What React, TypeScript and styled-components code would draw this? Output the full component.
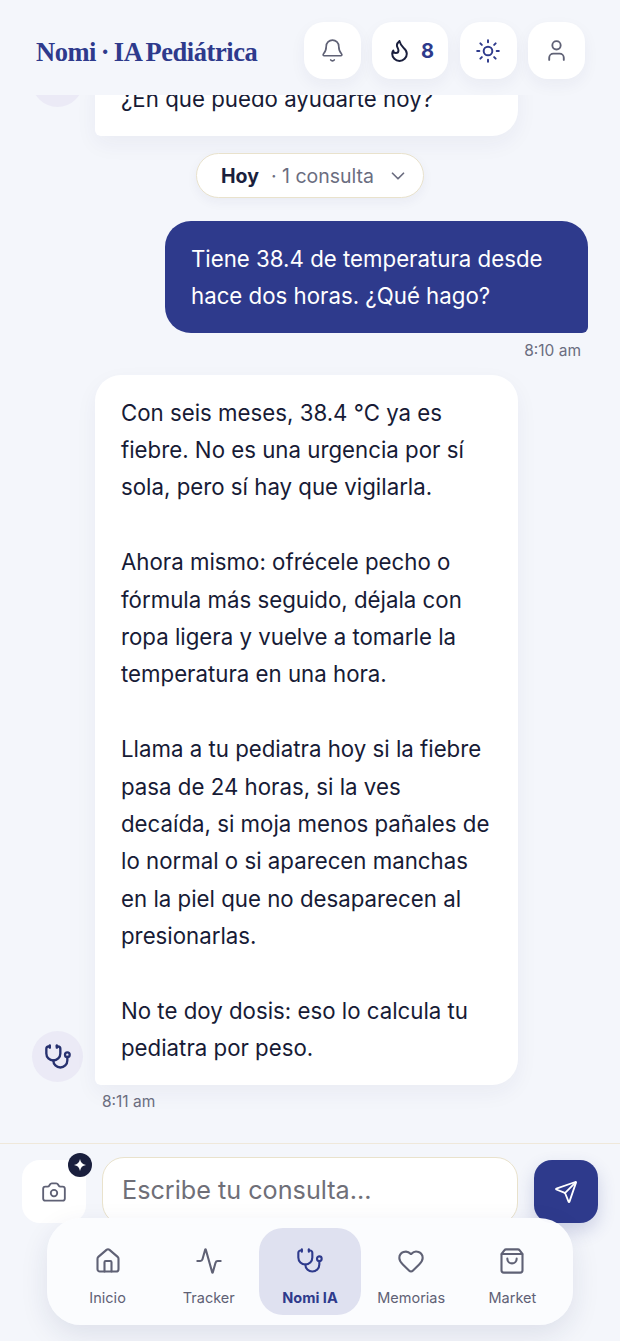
import React from "react";
import styled, { createGlobalStyle } from "styled-components";
import { Bell, Flame, Sun, User, ChevronDown, Camera, Send, House, Activity, Stethoscope, Heart, ShoppingBag } from "lucide-react";

const Global = createGlobalStyle`
  html, body { margin: 0; padding: 0; background: #f4f6fb; }
  * { box-sizing: border-box; }
  body { font-family: Inter, "Liberation Sans", sans-serif; color: #1a1f3d; }
`;

const Screen = styled.div`
  position: relative;
  width: 620px;
  height: 1341px;
  overflow: hidden;
  display: flex;
  flex-direction: column;
  background: #f4f6fb;
`;

const Header = styled.header`
  height: 95px;
  flex: none;
  padding: 22px 35px 0 36px;
  display: flex;
  justify-content: space-between;
  align-items: flex-start;
  position: relative;
  z-index: 2;
  background: #f4f6fb;
`;

const Logo = styled.div`
  font-family: "Liberation Serif", serif;
  font-weight: 700;
  font-size: 26.5px;
  letter-spacing: -0.45px;
  word-spacing: -1.5px;
  line-height: 60px;
  color: #2e3a8c;
`;

const Actions = styled.div`
  display: flex;
  gap: 11.3px;
`;

const IconButton = styled.div<{ $wide?: boolean }>`
  height: 57px;
  width: ${(p) => (p.$wide ? 76 : 57)}px;
  border-radius: 20px;
  background: #fff;
  box-shadow: 0 6px 16px rgba(30, 40, 90, 0.05);
  display: flex;
  align-items: center;
  justify-content: center;
  gap: 9px;
  color: #5f6175;
`;

const Count = styled.span`
  font-size: 20px;
  font-weight: 700;
  color: #2e3a8c;
`;

const Chat = styled.main`
  height: 1048px;
  flex: none;
  overflow: hidden;
  display: flex;
  flex-direction: column;
  justify-content: flex-end;
  padding: 0 32px 0;
  position: relative;
`;

const BotRow = styled.div`
  display: flex;
  align-items: flex-end;
  gap: 12px;
`;

const Avatar = styled.div<{ $lift?: number }>`
  width: 51px;
  height: 51px;
  flex: none;
  margin-bottom: ${(p) => p.$lift ?? 3}px;
  border-radius: 50%;
  background: #ebeaf6;
  display: flex;
  align-items: center;
  justify-content: center;
  color: #27316f;
`;

const Bubble = styled.div<{ $user?: boolean }>`
  width: 423px;
  padding: 18.8px 26px 18.2px;
  font-size: 22.25px;
  line-height: 37.4px;
  white-space: pre-line;
  border-radius: ${(p) => (p.$user ? "26px 26px 6px 26px" : "26px 26px 26px 6px")};
  background: ${(p) => (p.$user ? "#2e3a8c" : "#fff")};
  color: ${(p) => (p.$user ? "#fff" : "#171b36")};
  box-shadow: ${(p) => (p.$user ? "none" : "0 8px 22px rgba(30, 40, 90, 0.05)")};
  margin-left: ${(p) => (p.$user ? "auto" : "0")};
`;

const PillRow = styled.div`
  display: flex;
  justify-content: center;
  margin: 17px 0 23px;
`;

const Pill = styled.div`
  height: 45px;
  width: 228px;
  border-radius: 23px;
  border: 1.5px solid #e9e2cc;
  background: #fff;
  box-shadow: 0 4px 12px rgba(30, 40, 90, 0.05);
  display: flex;
  align-items: center;
  padding: 1px 14px 0 24px;
  font-size: 19.5px;
  color: #6b6d80;
`;

const PillDay = styled.span`
  font-weight: 700;
  color: #1a1f3d;
  margin-right: 12px;
`;

const PillIcon = styled(ChevronDown)`
  margin-left: auto;
`;

const Time = styled.div<{ $user?: boolean }>`
  font-size: 15.5px;
  line-height: 20px;
  color: #6b6d80;
  margin-top: ${(p) => (p.$user ? "8px" : "7px")};
  margin-bottom: ${(p) => (p.$user ? "14px" : "31px")};
  margin-left: ${(p) => (p.$user ? "auto" : "70px")};
  margin-right: ${(p) => (p.$user ? "7px" : "0")};
`;

const Composer = styled.div`
  flex: 1;
  border-top: 1px solid #efe8da;
  padding: 13px 22px 0;
  display: flex;
  align-items: flex-start;
  gap: 16px;
`;

const CameraButton = styled.div`
  position: relative;
  width: 64px;
  height: 63px;
  margin-top: 3px;
  flex: none;
  border-radius: 18px;
  background: #fff;
  display: flex;
  align-items: center;
  justify-content: center;
  color: #5f6175;
`;

const Badge = styled.span`
  position: absolute;
  top: -7px;
  right: -6px;
  width: 24px;
  height: 24px;
  border-radius: 50%;
  background: #1a1f3d;
  display: flex;
  align-items: center;
  justify-content: center;
`;

const Input = styled.div`
  flex: 1;
  height: 68px;
  border: 1.5px solid #e9e2cc;
  border-radius: 22px;
  background: #fff;
  padding: 0 19px 2px;
  display: flex;
  align-items: center;
  font-size: 25.2px;
  color: #6f6f78;
`;

const SendButton = styled.div`
  width: 64px;
  height: 63px;
  margin-top: 3px;
  flex: none;
  border-radius: 18px;
  background: #2e3a8c;
  box-shadow: 0 8px 18px rgba(46, 58, 140, 0.2);
  display: flex;
  align-items: center;
  justify-content: center;
  color: #fff;
`;

const Nav = styled.nav`
  position: absolute;
  left: 47px;
  top: 1218px;
  width: 526px;
  height: 107px;
  border-radius: 34px;
  background: rgba(251, 252, 254, 0.98);
  box-shadow: 0 10px 28px rgba(30, 40, 90, 0.1);
  padding: 10px;
  display: grid;
  grid-template-columns: repeat(5, 1fr);
  z-index: 3;
`;

const NavItem = styled.div<{ $active?: boolean }>`
  border-radius: 24px;
  background: ${(p) => (p.$active ? "#dfe1f0" : "transparent")};
  color: ${(p) => (p.$active ? "#2e3a8c" : "#5f6175")};
  display: flex;
  flex-direction: column;
  align-items: center;
  justify-content: flex-start;
  padding-top: 19px;
  gap: 14px;
  font-size: 14.5px;
  line-height: 18px;
  font-weight: ${(p) => (p.$active ? 700 : 400)};
`;

const nav = [
  { label: "Inicio", Icon: House },
  { label: "Tracker", Icon: Activity },
  { label: "Nomi IA", Icon: Stethoscope, active: true },
  { label: "Memorias", Icon: Heart },
  { label: "Market", Icon: ShoppingBag },
];

export default function App() {
  return (
    <Screen>
      <Global />
      <Header>
        <Logo>Nomi · IA Pediátrica</Logo>
        <Actions>
          <IconButton><Bell size={25} strokeWidth={1.6} /></IconButton>
          <IconButton $wide>
            <Flame size={25} strokeWidth={1.9} color="#1a1f3d" />
            <Count>8</Count>
          </IconButton>
          <IconButton><Sun size={26} strokeWidth={1.8} color="#2e3a8c" /></IconButton>
          <IconButton><User size={25} strokeWidth={1.8} /></IconButton>
        </Actions>
      </Header>
      <Chat>
        <BotRow>
          <Avatar $lift={29} />
          <Bubble>{"¿En qué puedo ayudarte hoy?"}</Bubble>
        </BotRow>
        <PillRow>
          <Pill>
            <PillDay>Hoy</PillDay>· 1 consulta
            <PillIcon size={22} strokeWidth={1.9} />
          </Pill>
        </PillRow>
        <Bubble $user>{"Tiene 38.4 de temperatura desde hace dos horas. ¿Qué hago?"}</Bubble>
        <Time $user>8:10 am</Time>
        <BotRow>
          <Avatar><Stethoscope size={28} strokeWidth={2} /></Avatar>
          <Bubble>{`Con seis meses, 38.4 °C ya es fiebre. No es una urgencia por sí sola, pero sí hay que vigilarla.

Ahora mismo: ofrécele pecho o fórmula más seguido, déjala con ropa ligera y vuelve a tomarle la temperatura en una hora.

Llama a tu pediatra hoy si la fiebre pasa de 24 horas, si la ves decaída, si moja menos pañales de lo normal o si aparecen manchas en la piel que no desaparecen al presionarlas.

No te doy dosis: eso lo calcula tu pediatra por peso.`}</Bubble>
        </BotRow>
        <Time>8:11 am</Time>
      </Chat>
      <Composer>
        <CameraButton>
          <Camera size={26} strokeWidth={1.7} />
          <Badge>
            <svg width="12" height="12" viewBox="0 0 12 12"><path d="M6 0 C6.6 3.6 8.4 5.4 12 6 C8.4 6.6 6.6 8.4 6 12 C5.4 8.4 3.6 6.6 0 6 C3.6 5.4 5.4 3.6 6 0Z" fill="#fff" /></svg>
          </Badge>
        </CameraButton>
        <Input>Escribe tu consulta...</Input>
        <SendButton><Send size={24} strokeWidth={1.8} /></SendButton>
      </Composer>
      <Nav>
        {nav.map(({ label, Icon, active }) => (
          <NavItem key={label} $active={active}>
            <Icon size={28} strokeWidth={1.8} />
            {label}
          </NavItem>
        ))}
      </Nav>
    </Screen>
  );
}
